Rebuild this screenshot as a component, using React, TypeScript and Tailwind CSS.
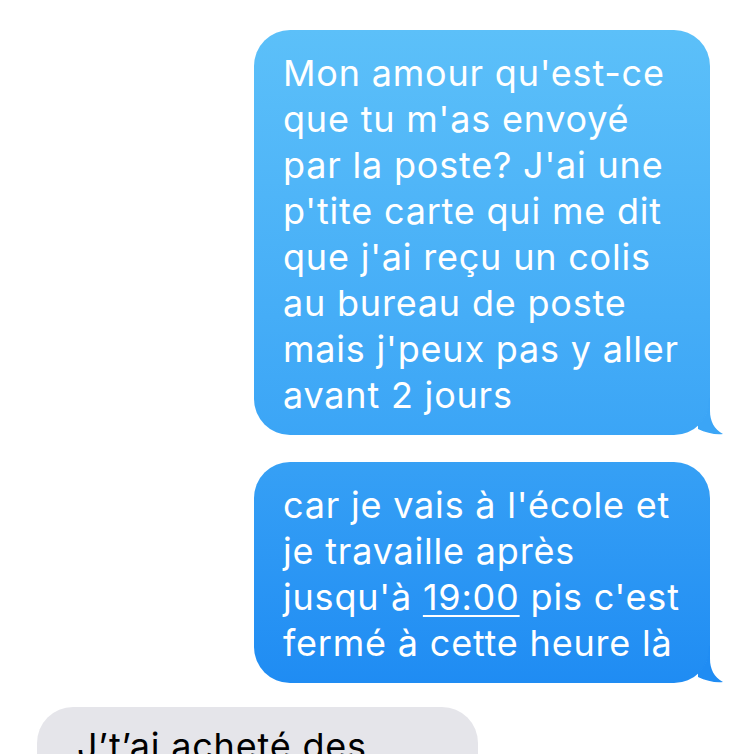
import React from 'react';

const first = [
  "Mon amour qu'est-ce",
  'que tu m\'as envoyé',
  "par la poste? J'ai une",
  "p'tite carte qui me dit",
  "que j'ai reçu un colis",
  'au bureau de poste',
  "mais j'peux pas y aller",
  'avant 2 jours',
];

// little hook under the outgoing bubble, hugs the rounded corner
function Tail({ color }: { color: string }) {
  return (
    <svg className="absolute -right-[14px] bottom-0" width="34" height="40" viewBox="0 0 34 40">
      <path d="M20 3 L20 16 C20 26 24 34 33 39 C26 40 16 38 8 34 L8 30 A35 35 0 0 0 19 3 Z" fill={color} />
    </svg>
  );
}

export default function App() {
  return (
    <div className="w-[750px] h-[754px] overflow-hidden bg-white tracking-[0.8px]" style={{ fontFamily: 'Inter, "Liberation Sans", sans-serif' }}>
      <div className="flex flex-col pt-[30px]">
        {/* message 1 */}
        <div className="relative ml-[254px] w-[456px] rounded-[36px] bg-gradient-to-b from-[#5cc0f9] to-[#3ba5f6] pl-[29px] pt-[20px] pb-[17px] text-white text-[36px] leading-[46px]">
          {first.map((l, i) => (
            <div key={i} className="whitespace-nowrap">{l}</div>
          ))}
          <Tail color="#3ba5f6" />
        </div>

        {/* message 2 */}
        <div className="relative mt-[27px] ml-[254px] w-[456px] rounded-[36px] bg-gradient-to-b from-[#36a0f5] to-[#1f8cf3] pl-[29px] pt-[20px] pb-[17px] text-white text-[36px] leading-[46px]">
          <div className="whitespace-nowrap">car je vais à l'école et</div>
          <div className="whitespace-nowrap">je travaille après</div>
          <div className="whitespace-nowrap">
            jusqu'à <span className="underline underline-offset-[5px] decoration-[2px]">19:00</span> pis c'est
          </div>
          <div className="whitespace-nowrap">fermé à cette heure là</div>
          <Tail color="#1f8cf3" />
        </div>

        {/* incoming */}
        <div className="mt-[24px] ml-[37px] w-[441px] rounded-[36px] bg-[#e5e5ea] pl-[40px] pt-[16px] pb-[20px] text-black text-[36px] leading-[46px]">
          <div className="whitespace-nowrap">J’t’ai acheté des</div>
          <div className="whitespace-nowrap">affaires</div>
        </div>
      </div>
    </div>
  );
}
